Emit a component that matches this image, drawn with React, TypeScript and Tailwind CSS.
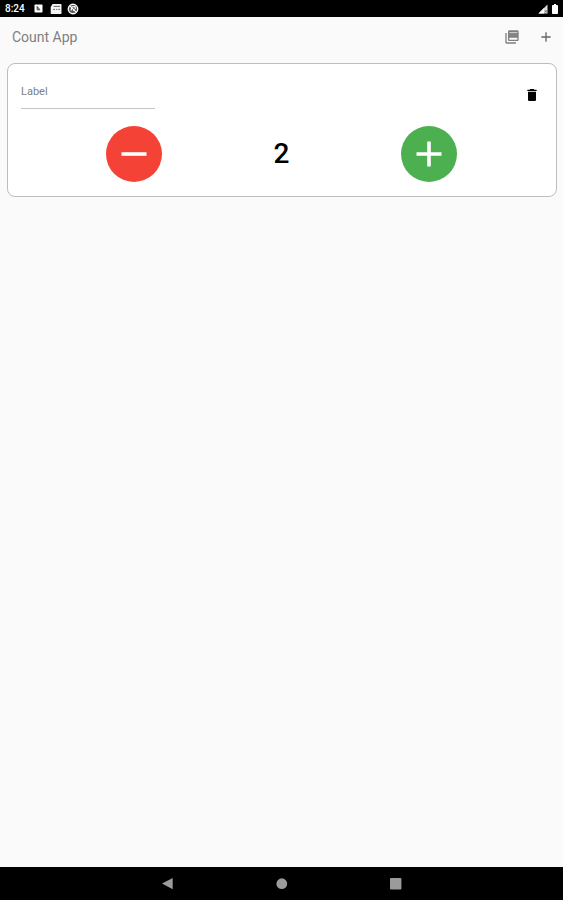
import { MdAdd, MdDelete } from "react-icons/md";

function StatusBar() {
    return (
        <div className="h-[17px] shrink-0 bg-black text-white flex items-center justify-between px-[5px]">
            <div className="flex items-center">
                <span className="w-[29px] text-[10px] leading-none font-medium">8:24</span>
                <svg className="w-[9px] h-[9px]" viewBox="0 0 9 9">
                    <rect x="0.5" y="0.5" width="8" height="8" rx="0.8" fill="#fff" />
                    <path d="M3.2 2.4v3.4h2.6M3.2 2.6l2.6 3" stroke="#333" strokeWidth="1" fill="none" />
                </svg>
                <svg className="w-[12px] h-[12px] ml-[7px]" viewBox="0 0 12 12">
                    <path d="M2.6 1h8.2q.7 0 .7.7v8.6q0 .7-.7.7H1.4q-.7 0-.7-.7V4z" fill="#f4f4f4" />
                    <path d="M3.6 3.4h6.4M3.2 6.4h1.8M6.2 6.4h1.2M8.4 6.4h1.6" stroke="#555" strokeWidth="0.9" />
                </svg>
                <svg className="w-[12px] h-[12px] ml-[5px]" viewBox="0 0 12 12">
                    <circle cx="6" cy="6" r="4.7" stroke="#fff" strokeWidth="1.4" fill="#555" />
                    <path d="M2.8 2.8l6.4 6.4M4 7.5l1-3.5 3-.6.4 2.6M6 7.8l2-1" stroke="#fff" strokeWidth="1.2" fill="none" />
                </svg>
            </div>
            <div className="flex items-center gap-[4px]">
                <svg className="w-[10px] h-[10px]" viewBox="0 0 10 10">
                    <path d="M0.5 9.5L9.5 0.5v9z" fill="#ddd" />
                    <path d="M0.5 9.5L6 4v5.5z" fill="#fff" />
                    <path d="M6.7 6.2l2.2 2.4M8.9 6.2L6.7 8.6" stroke="#555" strokeWidth="0.7" />
                </svg>
                <svg className="w-[6px] h-[10px]" viewBox="0 0 6 10">
                    <path d="M2 0h2v1h1.2q.8 0 .8.8v7.4q0 .8-.8.8H.8Q0 10 0 9.2V1.8Q0 1 .8 1H2z" fill="#fff" />
                </svg>
            </div>
        </div>
    );
}

function NavBar() {
    return (
        <div className="h-[33px] shrink-0 bg-black flex items-center justify-center gap-[102px]">
            <svg className="w-[12px] h-[12px]" viewBox="0 0 12 12">
                <path d="M0 5.5L10.7 0v11.2z" fill="#9b9b9b" />
            </svg>
            <svg className="w-[12px] h-[12px]" viewBox="0 0 12 12">
                <circle cx="5.8" cy="5.7" r="5.4" fill="#9b9b9b" />
            </svg>
            <svg className="w-[12px] h-[12px]" viewBox="0 0 12 12">
                <rect x="0" y="0" width="11.4" height="11.4" rx="1" fill="#9b9b9b" />
            </svg>
        </div>
    );
}

function PdfIcon() {
    return (
        <svg className="size-[16px]" viewBox="0 0 24 24" fill="currentColor">
            <path d="M4 6H2v14c0 1.1.9 2 2 2h14v-2H4z" />
            <path fillRule="evenodd" d="M8 2h12c1.1 0 2 .9 2 2v12c0 1.1-.9 2-2 2H8c-1.1 0-2-.9-2-2V4c0-1.1.9-2 2-2zm0 11v3h12v-3z" />
            <path d="M8 5.4h12" stroke="#d0d0d0" strokeWidth="1.6" />
            <path d="M9 9.5h2M12.8 9.5h2M16.8 9.5h2" stroke="#999" strokeWidth="1.2" />
        </svg>
    );
}

function Counter({ value }: { value: number }) {
    return (
        <div className="h-[134px] rounded-[8px] border border-[#bdbdbd] bg-white">
            <div className="flex justify-between items-start pl-[13px] pr-[16px] pt-[20px]">
                <div className="w-[134px] h-[25px] border-b border-[#c4c4c4] text-[11px] leading-[16px] text-[#808080]">
                    Label
                </div>
                <button className="mt-[2.5px]">
                    <MdDelete className="size-[16px] text-black" />
                </button>
            </div>
            <div className="mt-[16.5px] pr-[1px] flex justify-center gap-[91.5px]">
                <button className="size-[56px] rounded-full bg-[#f44336] flex items-center justify-center">
                    <svg className="w-[26px] h-[26px]" viewBox="0 0 26 26">
                        <path d="M0.5 13h25" stroke="#fff" strokeWidth="3.6" />
                    </svg>
                </button>
                <span className="w-[56px] text-center text-[28px] leading-[56px] font-medium text-black">{value}</span>
                <button className="size-[56px] rounded-full bg-[#4caf50] flex items-center justify-center">
                    <svg className="w-[26px] h-[26px]" viewBox="0 0 26 26">
                        <path d="M0.5 13h25M13 0.5v25" stroke="#fff" strokeWidth="3.6" />
                    </svg>
                </button>
            </div>
        </div>
    );
}

export default function App() {
    return (
        <div className="h-[900px] w-[563px] flex flex-col bg-[#fafafa] font-['Roboto','Noto_Sans',sans-serif]">
            <StatusBar />
            <header className="h-[40px] shrink-0 flex items-center justify-between pl-[12px] pr-[9px] text-[#808080]">
                <h1 className="text-[14px] leading-none">Count App</h1>
                <div className="flex items-center gap-[18px]">
                    <PdfIcon />
                    <MdAdd className="size-[16px] text-[#666]" />
                </div>
            </header>
            <main className="flex-1 pt-[6px] pl-[7px] pr-[6px]">
                <Counter value={2} />
            </main>
            <NavBar />
        </div>
    );
}
